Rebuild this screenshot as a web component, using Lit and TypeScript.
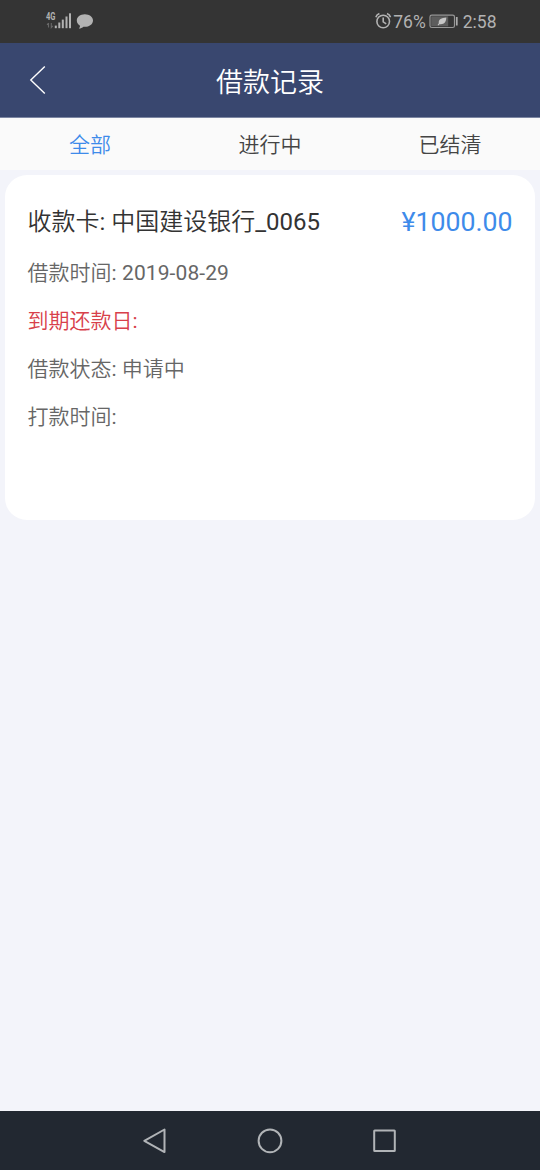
import { LitElement, html, css } from "lit";
import { customElement, state } from "lit/decorators.js";
import { classMap } from "lit/directives/class-map.js";

@customElement("status-bar")
class StatusBar extends LitElement {
  static styles = css`
    :host { display: flex; justify-content: space-between; align-items: center; box-sizing: border-box; height: 43px; padding: 0 43.5px 0 44px; background: #343434; color: #b2b2b2; font-size: 17.5px; font-weight: 400; line-height: 44px; }
    svg { display: block; flex: none; }
    .right { display: flex; align-items: center; }
    .battery { margin: 0 3.5px 0 3.5px; }
    .net { font: 700 10px Roboto, sans-serif; }
  `;
  render() {
    return html`
      <svg width="52" height="43" viewBox="0 0 52 43" fill="#b2b2b2">
        <text class="net" x="2" y="20.4" textLength="9.5" lengthAdjust="spacingAndGlyphs">4G</text>
        <path d="M4.5 23v4.5M3 24.8l1.5-1.6M7.3 23v4.5l1.5-1.6" stroke="#686868" stroke-width="1.1" fill="none"/>
        <rect x="10.8" y="25.6" width="2" height="2.6"/><rect x="14.3" y="22.5" width="2" height="5.7"/><rect x="17.8" y="19.6" width="2" height="8.6"/><rect x="21.5" y="16.5" width="2" height="11.7"/><rect x="25" y="13.3" width="2" height="14.9"/>
        <path d="M40.8 14.2c-4.6 0-8 2.8-8 6.3 0 2.3 1.4 4.1 3.2 5.2.1 1.2-.7 2.3-1.2 2.9 1.9 0 3.5-.8 4.7-1.8 5.3.5 9.5-2.3 9.5-6.3 0-3.5-3.6-6.3-8.2-6.3Z"/>
      </svg>
      <div class="right">
        <svg width="18" height="43" viewBox="0 0 18 43" fill="none" stroke="#b2b2b2" stroke-width="1.6">
          <circle cx="8.2" cy="21.5" r="6.3"/><path d="M8.2 17.5v4.4l3 2M.9 17.3q.6-2.6 3.5-3.8M12 13.5q2.9 1.2 3.5 3.8"/>
        </svg>
        <span>76%</span>
        <svg class="battery" width="30" height="43" viewBox="0 0 30 43">
          <rect x="1" y="15.1" width="24.5" height="12.4" rx="1.8" fill="none" stroke="#979797" stroke-width="1.2"/>
          <rect x="2.2" y="16.3" width="17" height="10" fill="#5d5d5d"/>
          <path d="M17.3 17.6c-4.8.2-8.1 2.1-7.5 5.7L8.6 25l.7.5 1.2-1.3c4.2.8 6.8-2 6.8-6.6Z" fill="#c6c6c6"/>
          <path d="M27.8 17v8.5" stroke="#aaa" stroke-width="1.7"/>
        </svg>
        <span>2:58</span>
      </div>
    `;
  }
}

@customElement("nav-bar")
class NavBar extends LitElement {
  static styles = css`
    :host { display: grid; grid-template-columns: repeat(3, 115px); justify-content: center; justify-items: center; align-items: center; height: 59px; background: #222831; }
    svg { display: block; fill: none; stroke: #b1b4b7; stroke-width: 2; stroke-linejoin: round; }
  `;
  render() {
    return html`
      <svg width="28" height="28" viewBox="0 0 28 28"><path d="M23.5 2.5v22.6L3.3 13.8Z"/></svg>
      <svg width="28" height="28" viewBox="0 0 28 28"><circle cx="14" cy="13.8" r="11.4"/></svg>
      <svg width="28" height="28" viewBox="0 0 28 28"><rect x="3.2" y="3.5" width="20.6" height="20.6" rx=".5"/></svg>
    `;
  }
}

@customElement("loan-card")
class LoanCard extends LitElement {
  static styles = css`
    :host { display: block; box-sizing: border-box; height: 345px; margin: 5px 5px 0; padding: 22px 22.5px 0 22.5px; border-radius: 22px; background: #fff; color: #666; font-size: 21px; }
    .head { display: flex; justify-content: space-between; line-height: 50px; color: #333; font-size: 24px; }
    .amount { color: #3e8bea; font-size: 26.7px; }
    .row { height: 48px; line-height: 48px; margin: 0; }
    .rows { padding-top: 2px; }
    .due { color: #d8404a; }
    .num, .amount { font-weight: 400; }
    .date { letter-spacing: 0.1px; }
  `;
  render() {
    return html`
      <div class="head"><span>收款卡<span class="num">: </span>中国建设银行<span class="num">_0065</span></span><span class="amount">¥1000.00</span></div>
      <div class="rows">
        <p class="row">借款时间<span class="num date">: 2019-08-29</span></p>
        <p class="row due">到期还款日<span class="num">:</span></p>
        <p class="row">借款状态<span class="num">: </span>申请中</p>
        <p class="row">打款时间<span class="num">:</span></p>
      </div>
    `;
  }
}

@customElement("app-root")
class AppRoot extends LitElement {
  static styles = css`
    :host { display: flex; flex-direction: column; height: 1170px; background: #f3f4fa; font-family: Roboto, "Noto Sans CJK SC", sans-serif; font-weight: 350; }
    header { display: grid; grid-template-columns: 75px 1fr 75px; align-items: center; box-sizing: border-box; height: 75px; background: #39476f; border-bottom: 1px solid #7c86a2; color: #fff; }
    .back { display: block; margin: 0 0 1px 28px; }
    h1 { margin: 0; padding-top: 6px; text-align: center; font-size: 27px; font-weight: 350; line-height: 68px; }
    nav { display: grid; grid-template-columns: repeat(3, 1fr); height: 52px; background: #fafafa; color: #444; font-size: 21px; line-height: 54px; text-align: center; }
    .active { color: #3e8bea; }
    main { flex: 1; }
  `;
  @state() private current = 0;
  render() {
    return html`
      <status-bar></status-bar>
      <header>
        <svg class="back" width="20" height="32" viewBox="0 0 20 32" fill="none" stroke="#fff" stroke-width="1.4"><path d="M16.8 2.5 2.8 16l14 13.5"/></svg>
        <h1>借款记录</h1>
      </header>
      <nav>${["全部", "进行中", "已结清"].map((t, i) => html`<span class=${classMap({ active: i === this.current })} @click=${() => (this.current = i)}>${t}</span>`)}</nav>
      <main><loan-card></loan-card></main>
      <nav-bar></nav-bar>
    `;
  }
}
